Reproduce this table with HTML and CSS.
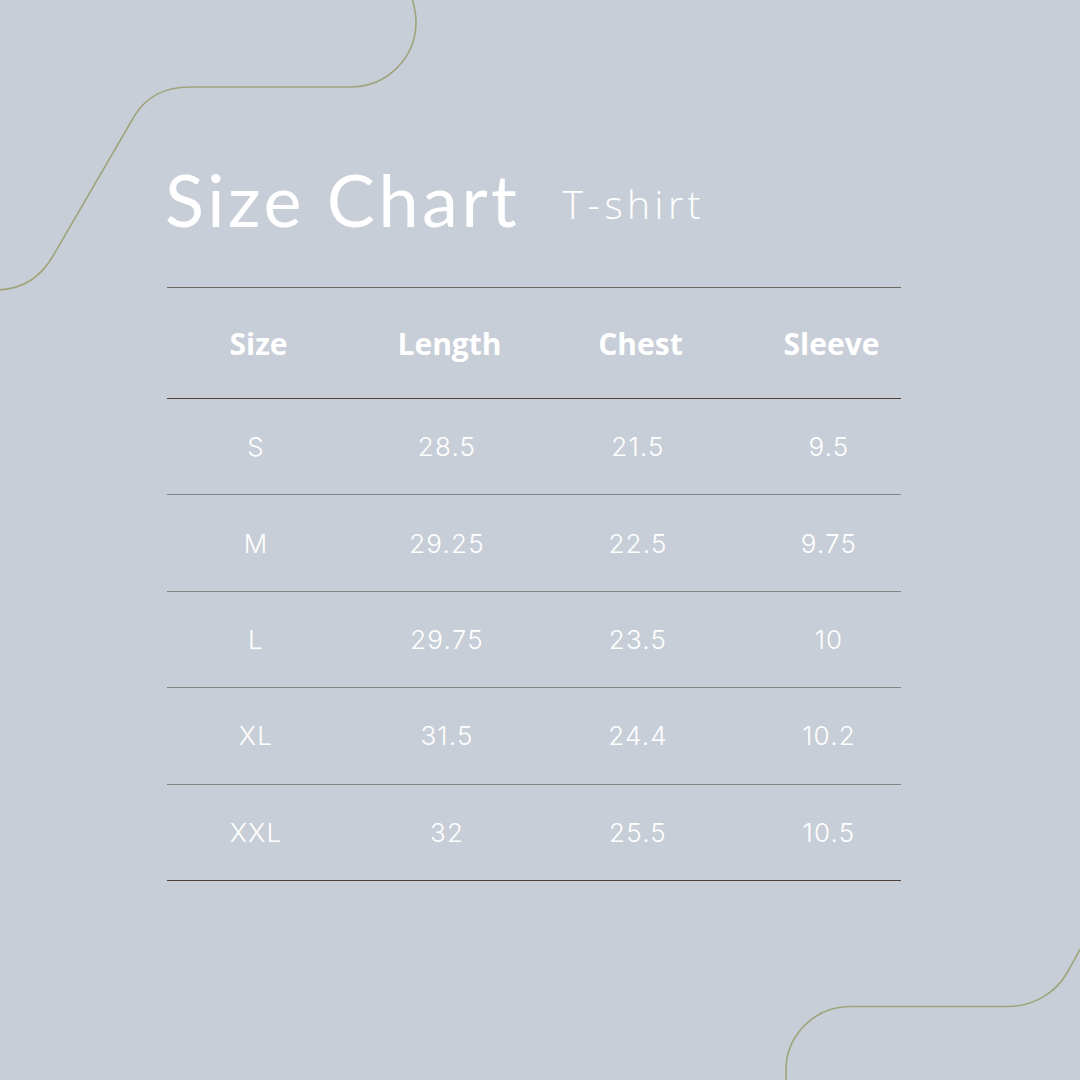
FILE: index.html
```html
<!DOCTYPE html>
<html lang="en">
<head>
<meta charset="utf-8">
<title>Size Chart</title>
<link rel="stylesheet" href="styles.css">
</head>
<body>
<div class="page">
  <svg class="deco" width="1080" height="1080" viewBox="0 0 1080 1080" aria-hidden="true">
    <path d="M -2 290 C 25 289 42 275 53 256 L 135 115 C 147 96 166 87 190 87 L 350 87 C 388 87 416 57 416 22 C 416 12 414 5 412 -2" />
    <path d="M 786 1082 L 786 1070 C 786 1035 815 1006.5 850 1006.5 L 1008 1006.5 C 1032 1006.5 1055 994 1067 973 L 1082 946" />
  </svg>
  <main class="content">
    <header class="title-row">
      <h1 class="title">Size Chart</h1>
      <span class="subtitle">T-shirt</span>
    </header>
    <div class="table">
      <div class="row head">
        <div class="cells"><span>Size</span><span>Length</span><span>Chest</span><span>Sleeve</span></div>
      </div>
      <div class="row"><div class="cells"><span>S</span><span>28.5</span><span>21.5</span><span>9.5</span></div></div>
      <div class="row"><div class="cells"><span>M</span><span>29.25</span><span>22.5</span><span>9.75</span></div></div>
      <div class="row"><div class="cells"><span>L</span><span>29.75</span><span>23.5</span><span>10</span></div></div>
      <div class="row"><div class="cells"><span>XL</span><span>31.5</span><span>24.4</span><span>10.2</span></div></div>
      <div class="row last"><div class="cells"><span>XXL</span><span>32</span><span>25.5</span><span>10.5</span></div></div>
    </div>
  </main>
</div>
</body>
</html>
```
FILE: styles.css
```css
html, body {
  margin: 0;
  padding: 0;
}
body {
  background: #c8ced7;
  width: 1080px;
  height: 1080px;
  overflow: hidden;
}
.page {
  position: relative;
  width: 1080px;
  height: 1080px;
}
.deco {
  position: absolute;
  left: 0;
  top: 0;
  pointer-events: none;
}
.deco path {
  fill: none;
  stroke: #a0a47c;
  stroke-width: 1.6;
}
.content {
  position: relative;
  padding: 161px 179px 0 167px;
}
.title-row {
  display: flex;
  align-items: flex-end;
  gap: 42px;
  height: 80px;
  margin-left: -2px;
}
.title {
  margin: 0 0 2px 0;
  font-family: "Lato", sans-serif;
  font-weight: 400;
  font-size: 72px;
  line-height: 80px;
  letter-spacing: 3.5px;
  color: #ffffff;
}
.subtitle {
  font-family: "Open Sans", sans-serif;
  font-weight: 300;
  font-size: 39px;
  line-height: 40px;
  letter-spacing: 4.5px;
  color: #ffffff;
  margin-bottom: 17px;
}
.table {
  margin-top: 46px;
  width: 734px;
  border-top: 1px solid #6f6a66;
}
.row {
  box-sizing: border-box;
  height: 96.4px;
  border-bottom: 1px solid #848283;
  display: flex;
  align-items: center;
}
.row.head {
  height: 111px;
  border-bottom-color: #4d4038;
}
.row.last {
  border-bottom-color: #4d4038;
}
.cells {
  display: grid;
  grid-template-columns: repeat(4, 191px);
  justify-items: center;
  margin-left: -6.5px;
  font-family: "Inter", sans-serif;
  font-weight: 300;
  font-size: 26px;
  letter-spacing: 1.2px;
  color: #ffffff;
}
.head .cells {
  font-family: "Open Sans", sans-serif;
  font-weight: 700;
  font-size: 30px;
  letter-spacing: 0;
  margin-left: -4px;
}
```
